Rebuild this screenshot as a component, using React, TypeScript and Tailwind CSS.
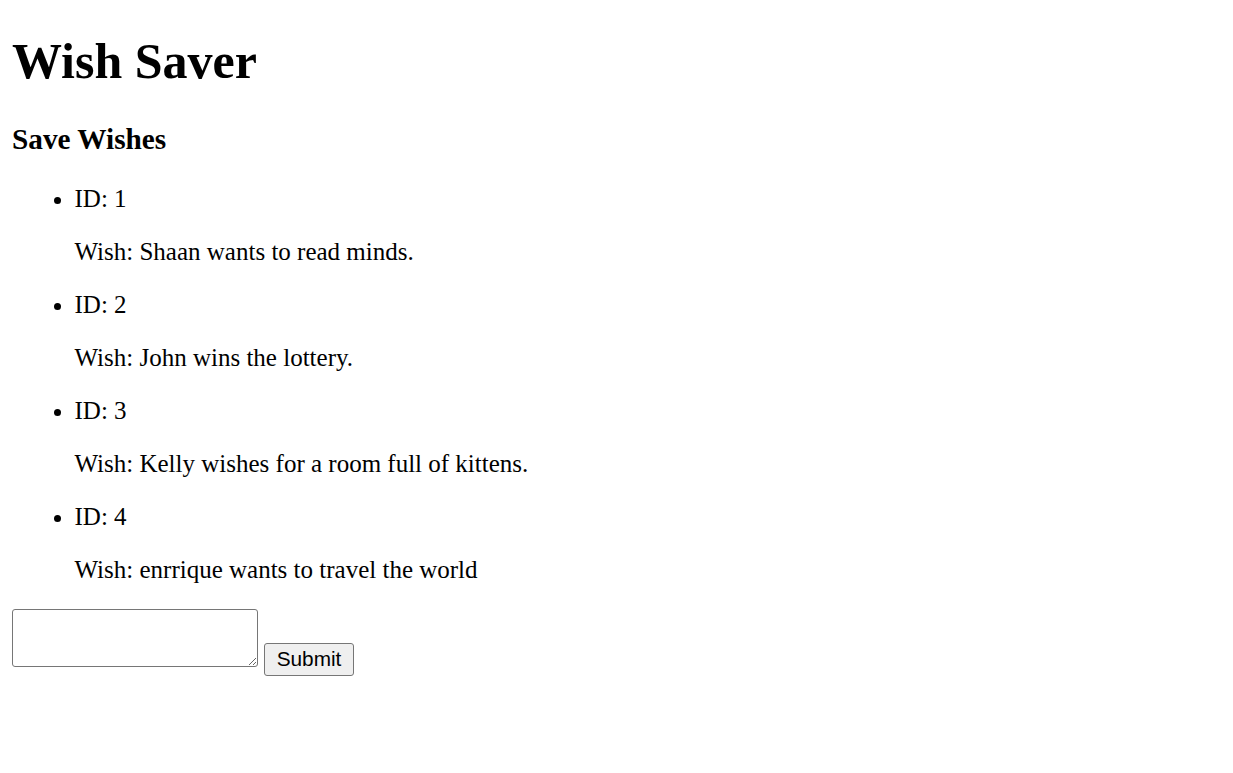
const wishes = [
  { id: 1, text: "Shaan wants to read minds." },
  { id: 2, text: "John wins the lottery." },
  { id: 3, text: "Kelly wishes for a room full of kittens." },
  { id: 4, text: "enrrique wants to travel the world" },
];

export default function App() {
  return (
    <div className="min-h-screen bg-white text-black px-[12px] pb-[12.5px] pt-px font-['Liberation_Serif',serif] text-[25px] leading-[normal]">
      <h1 className="text-[50px] font-bold mt-[30.5px] mb-[33.5px]">Wish Saver</h1>
      <h3 className="text-[29.25px] font-bold my-[29.25px]">Save Wishes</h3>
      <ul className="list-disc pl-[62.5px] my-[25px]">
        {wishes.map((w) => (
          <li key={w.id}>
            ID: {w.id}
            <p className="my-[25px]">Wish: {w.text}</p>
          </li>
        ))}
      </ul>
      <form className="flex items-start gap-[6px]" onSubmit={(e) => e.preventDefault()}>
        <textarea className="w-[246px] h-[58px] border border-[#767676] rounded-[3px] bg-white font-['Liberation_Mono',monospace] text-[20.8px]" />
        <button
          type="submit"
          className="mt-[34px] w-[90px] h-[33px] bg-[#efefef] border border-[#767676] rounded-[3px] font-['Liberation_Sans',Arial,sans-serif] text-[20.8px] leading-none"
        >
          Submit
        </button>
      </form>
    </div>
  );
}
